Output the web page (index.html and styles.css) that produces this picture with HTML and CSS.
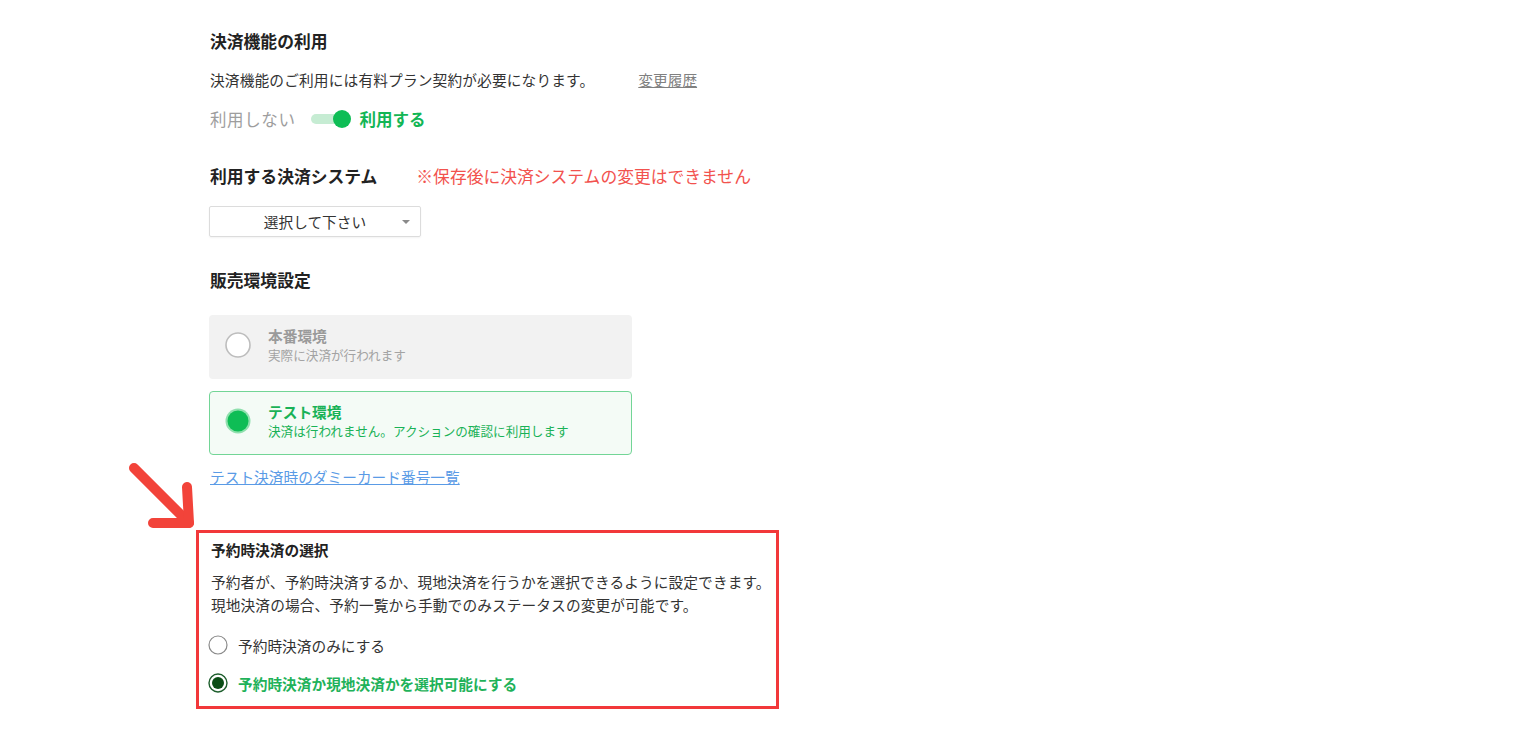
FILE: index.html
```html
<!DOCTYPE html>
<html lang="ja">
<head>
  <meta charset="UTF-8" />
  <meta name="viewport" content="width=device-width, initial-scale=1" />
  <title>決済設定</title>
  <link rel="stylesheet" href="styles.css">
</head>
<body>
  <main class="page">

    <!-- 決済機能の利用 -->
    <h2 class="title">決済機能の利用</h2>
    <p class="note-row">決済機能のご利用には有料プラン契約が必要になります。<a href="#" class="history">変更履歴</a></p>
    <div class="toggle-row">
      <span class="off-label">利用しない</span>
      <span class="toggle"><span class="knob"></span></span>
      <span class="on-label">利用する</span>
    </div>

    <!-- 決済システム -->
    <div class="title-row">
      <h2 class="title">利用する決済システム</h2>
      <span class="warn">※保存後に決済システムの変更はできません</span>
    </div>
    <div class="select">
      <span>選択して下さい</span>
      <span class="caret"></span>
    </div>

    <!-- 販売環境設定 -->
    <h2 class="title env-title">販売環境設定</h2>
    <div class="env-card disabled">
      <svg class="env-radio" width="28" height="28" viewBox="0 0 28 28">
        <circle cx="14" cy="14" r="12" fill="#fff" stroke="#bdbdbd" stroke-width="1.6" />
      </svg>
      <div>
        <div class="env-name">本番環境</div>
        <div class="env-desc">実際に決済が行われます</div>
      </div>
    </div>
    <div class="env-card active">
      <svg class="env-radio" width="28" height="28" viewBox="0 0 28 28">
        <circle cx="14" cy="14" r="12.5" fill="#8fe0ad" />
        <circle cx="14" cy="14" r="10.5" fill="#0ebd55" />
      </svg>
      <div>
        <div class="env-name">テスト環境</div>
        <div class="env-desc">決済は行われません。アクションの確認に利用します</div>
      </div>
    </div>
    <a href="#" class="dummy-link">テスト決済時のダミーカード番号一覧</a>

    <!-- 予約時決済の選択 -->
    <section class="highlight">
      <svg class="arrow" width="76" height="76" viewBox="0 0 76 76">
        <g fill="none" stroke="#f2433a" stroke-width="10" stroke-linecap="round" stroke-linejoin="round">
          <path d="M8 9 L63 64" />
          <path d="M61 28 L63 64 L27 64" />
        </g>
      </svg>
      <h3 class="box-title">予約時決済の選択</h3>
      <p class="box-desc">予約者が、予約時決済するか、現地決済を行うかを選択できるように設定できます。<br>現地決済の場合、予約一覧から手動でのみステータスの変更が可能です。</p>
      <label class="choice">
        <svg width="20" height="20" viewBox="0 0 20 20">
          <circle cx="10" cy="10" r="9" fill="#fff" stroke="#8a8a8a" stroke-width="1.2" />
        </svg>
        <span>予約時決済のみにする</span>
      </label>
      <label class="choice checked">
        <svg width="20" height="20" viewBox="0 0 20 20">
          <circle cx="10" cy="10" r="9" fill="#fff" stroke="#1d5e2c" stroke-width="1.4" />
          <circle cx="10" cy="10" r="6" fill="#0b4d16" />
        </svg>
        <span>予約時決済か現地決済かを選択可能にする</span>
      </label>
    </section>

  </main>
</body>
</html>
```

FILE: styles.css
```css
* {
  margin: 0;
  padding: 0;
  box-sizing: border-box;
}

body {
  font-family: "Noto Sans CJK JP", "Noto Sans", sans-serif;
  background: #fff;
  color: #333;
  font-size: 14.7px;
}

a {
  text-decoration: underline;
}

.page {
  padding: 29px 0 40px 210px;
}

.title {
  font-size: 16.8px;
  font-weight: bold;
  line-height: 24px;
  color: #222;
}

.note-row {
  margin-top: 16px;
  line-height: 22px;
  color: #333;
  letter-spacing: 0.15px;
}

.history {
  margin-left: 44px;
  color: #808080;
  letter-spacing: 0;
}

.toggle-row {
  margin-top: 16px;
  height: 24px;
  display: flex;
  align-items: center;
  font-size: 16.5px;
}

.off-label {
  color: #9e9e9e;
  letter-spacing: 0.6px;
}

.toggle {
  position: relative;
  width: 38px;
  height: 10px;
  margin: 0 11px 0 15px;
  border-radius: 5px;
  background: #c6ecd3;
}

.knob {
  position: absolute;
  right: -2px;
  top: -4px;
  width: 18px;
  height: 18px;
  border-radius: 50%;
  background: #0ebd55;
}

.on-label {
  color: #13b655;
  font-weight: bold;
}

.title-row {
  margin-top: 33px;
  display: flex;
  align-items: center;
}

.warn {
  margin-left: 39px;
  font-size: 16.8px;
  color: #f2524e;
}

.select {
  position: relative;
  margin-top: 18px;
  margin-left: -1px;
  width: 212px;
  height: 31px;
  border: 1px solid #dcdcdc;
  border-radius: 2px;
  box-shadow: 0 1px 2px rgba(0, 0, 0, 0.05);
  display: flex;
  align-items: center;
  justify-content: center;
  color: #333;
}

.caret {
  position: absolute;
  right: 10px;
  top: 13px;
  border-left: 4.5px solid transparent;
  border-right: 4.5px solid transparent;
  border-top: 4.5px solid #8a8a8a;
}

.env-title {
  margin-top: 31px;
}

.env-card {
  margin-top: 23px;
  margin-left: -1px;
  width: 423px;
  height: 64px;
  border-radius: 4px;
  display: flex;
  align-items: center;
  padding: 0 0 4px 15px;
}

.env-card + .env-card {
  margin-top: 12px;
}

.env-radio {
  flex-shrink: 0;
  margin-right: 16px;
}

.env-name {
  font-size: 14.7px;
  font-weight: bold;
  line-height: 20px;
}

.env-desc {
  font-size: 12.6px;
  line-height: 18px;
}

.env-card.disabled {
  background: #f2f2f2;
  color: #a3a3a3;
}

.env-card.disabled .env-name {
  color: #9a9a9a;
}

.env-card.active {
  background: #f4fbf6;
  border: 1px solid #72d596;
  color: #19b257;
  padding-left: 14px;
}

.dummy-link {
  display: inline-block;
  margin-top: 11px;
  line-height: 22px;
  color: #5a9be6;
}

.highlight {
  position: relative;
  margin-top: 42px;
  margin-left: -14px;
  width: 583px;
  border: 3px solid #f2383a;
  padding: 7px 0 11px 12px;
}

.arrow {
  position: absolute;
  left: -73px;
  top: -74px;
}

.box-title {
  font-size: 14.7px;
  font-weight: bold;
  line-height: 20px;
  color: #222;
}

.box-desc {
  margin-top: 10px;
  line-height: 23px;
  color: #333;
  letter-spacing: 0.1px;
}

.choice {
  margin-top: 17px;
  margin-left: -3px;
  height: 24px;
  display: flex;
  align-items: center;
  gap: 10px;
  color: #333;
}

.choice + .choice {
  margin-top: 14px;
}

.choice.checked span {
  color: #1fb25a;
  font-weight: bold;
}
```
